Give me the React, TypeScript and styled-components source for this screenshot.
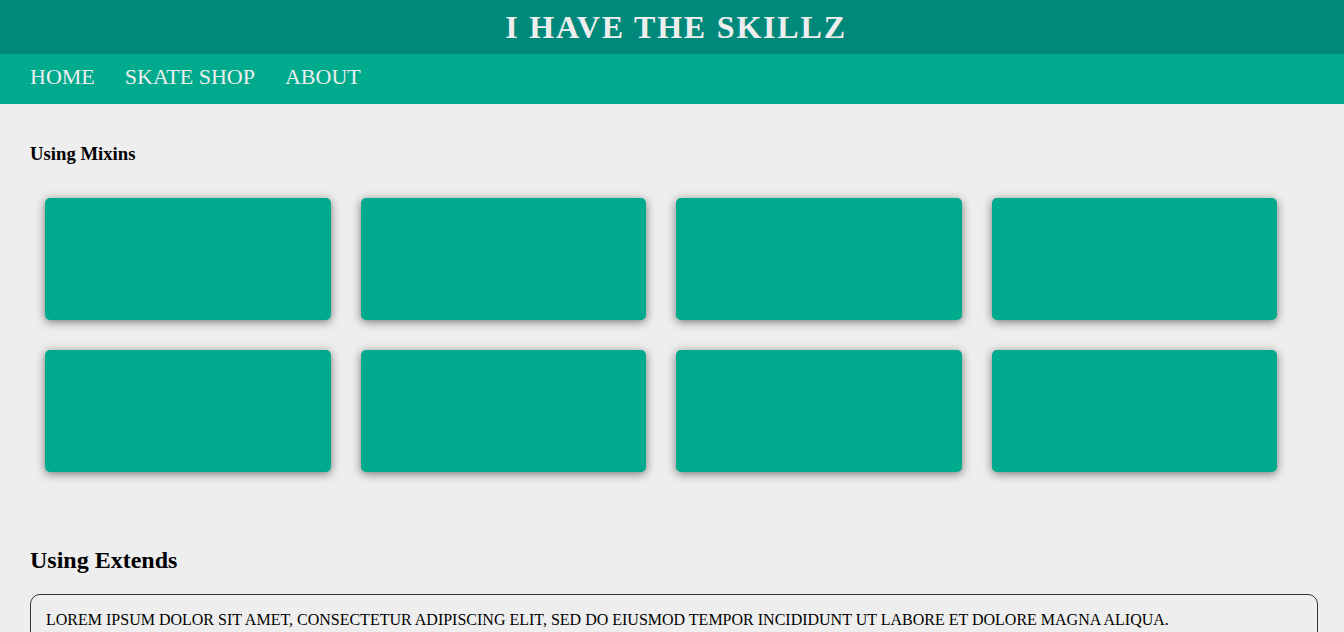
import React from "react";
import styled, { createGlobalStyle } from "styled-components";

const Global = createGlobalStyle`
  html, body { margin: 0; padding: 0; }
  body {
    background: #eeeeee;
    font-family: "Liberation Serif", "Times New Roman", serif;
    color: #000;
  }
`;

const Header = styled.header`
  background: #00897b;
  height: 54px;
  display: flex;
  align-items: center;
  justify-content: center;
`;

const Title = styled.h1`
  margin: 0;
  padding-left: 8px;
  font-size: 32px;
  font-weight: bold;
  letter-spacing: 1.8px;
  color: #eeeeee;
`;

const Nav = styled.nav`
  background: #00aa8d;
  height: 50px;
  box-sizing: border-box;
  padding: 0 30px 4px;
  display: flex;
  align-items: center;
  gap: 30px;
`;

const NavLink = styled.a`
  color: #eeeeee;
  font-size: 22px;
  text-decoration: none;
`;

const Main = styled.main`
  padding: 38px 26px 0 30px;
`;

const SectionTitle = styled.h3`
  margin: 0;
  font-size: 18.72px;
  line-height: 24px;
`;

const BigTitle = styled.h2`
  margin: 0;
  font-size: 24px;
  line-height: 30px;
`;

const Grid = styled.div`
  display: grid;
  grid-template-columns: repeat(4, 285.5px);
  grid-auto-rows: 122px;
  gap: 30px;
  padding: 32px 15px 0;
`;

const Card = styled.div`
  background: #00aa8d;
  border-radius: 5px;
  box-shadow: 0 2px 10px rgba(0, 0, 0, 0.5);
`;

const ExtendSection = styled.section`
  margin-top: 73px;
  display: flex;
  flex-direction: column;
  gap: 19px;
`;

const Box = styled.div`
  border: 1px solid #333;
  border-radius: 10px;
  padding: 16px 15px 12px;
  font-size: 16px;
  text-transform: uppercase;
`;

export default function App() {
  return (
    <>
      <Global />
      <Header>
        <Title>I HAVE THE SKILLZ</Title>
      </Header>
      <Nav>
        <NavLink href="#">HOME</NavLink>
        <NavLink href="#">SKATE SHOP</NavLink>
        <NavLink href="#">ABOUT</NavLink>
      </Nav>
      <Main>
        <SectionTitle>Using Mixins</SectionTitle>
        <Grid>
          {Array.from({ length: 8 }).map((_, i) => (
            <Card key={i} />
          ))}
        </Grid>
        <ExtendSection>
          <BigTitle>Using Extends</BigTitle>
          <Box>
            Lorem ipsum dolor sit amet, consectetur adipiscing elit, sed do eiusmod tempor incididunt ut labore et dolore magna aliqua.
          </Box>
        </ExtendSection>
      </Main>
    </>
  );
}
